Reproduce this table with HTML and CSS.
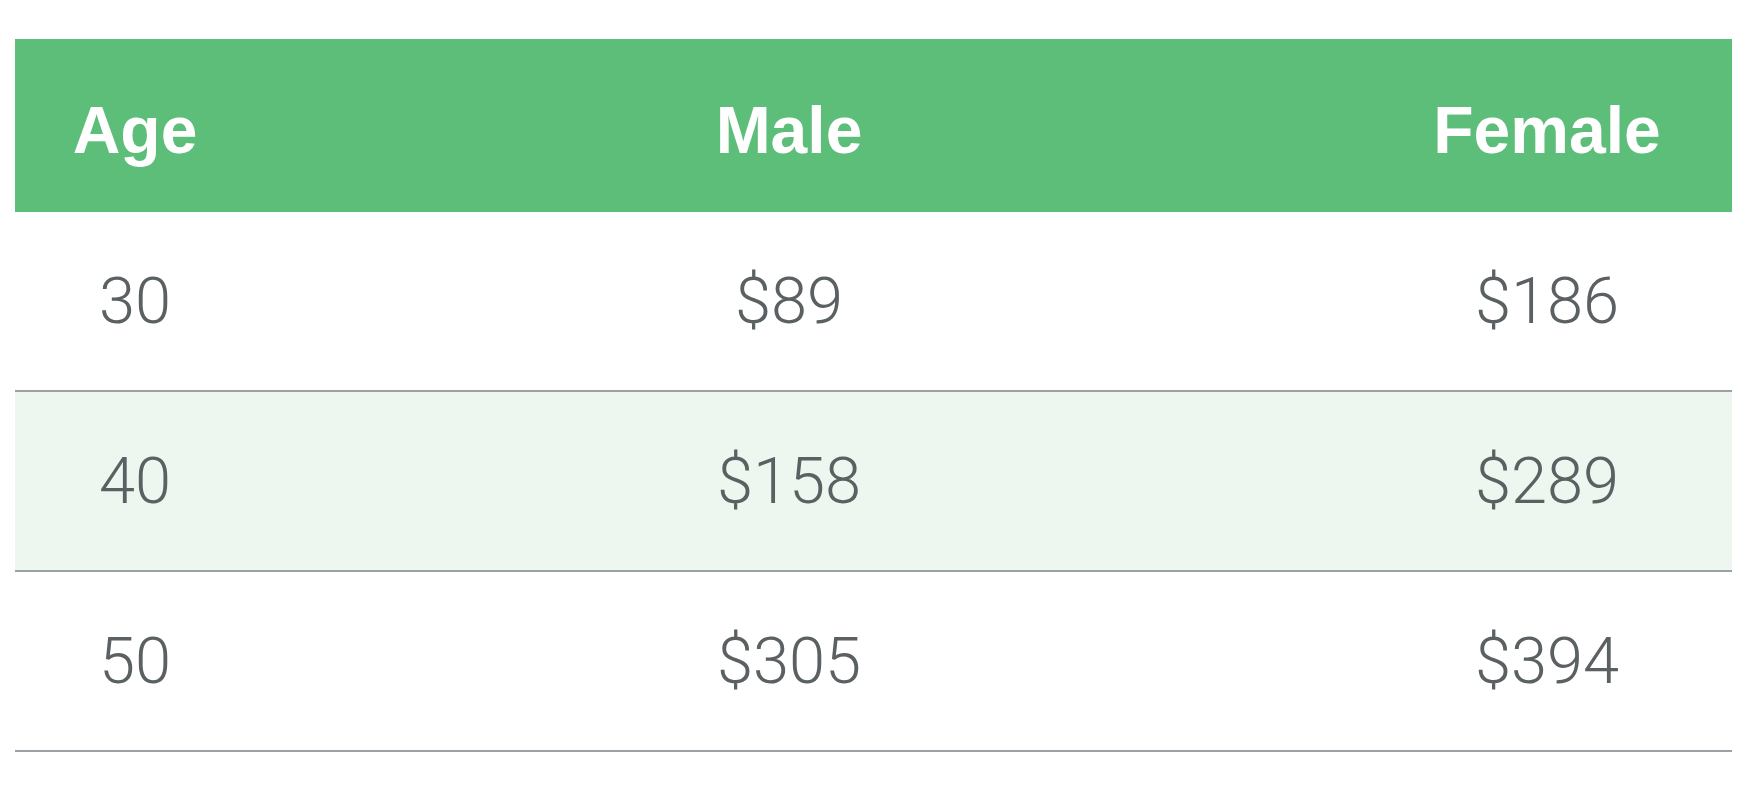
FILE: index.html
```html
<!DOCTYPE html>
<html lang="en">
<head>
<meta charset="utf-8">
<title>Premiums by age</title>
<link rel="stylesheet" href="styles.css">
</head>
<body>
  <div class="page">
    <div class="table">
      <div class="row head">
        <div class="cell c1">Age</div>
        <div class="cell c2">Male</div>
        <div class="cell c3">Female</div>
      </div>
      <div class="row">
        <div class="cell c1">30</div>
        <div class="cell c2">$89</div>
        <div class="cell c3">$186</div>
      </div>
      <div class="row alt">
        <div class="cell c1">40</div>
        <div class="cell c2">$158</div>
        <div class="cell c3">$289</div>
      </div>
      <div class="row">
        <div class="cell c1">50</div>
        <div class="cell c2">$305</div>
        <div class="cell c3">$394</div>
      </div>
    </div>
  </div>
</body>
</html>
```

FILE: styles.css
```css
html, body {
  margin: 0;
  padding: 0;
  background: #ffffff;
}

.page {
  padding: 39px 14px 0 15px;
}

.table {
  display: flex;
  flex-direction: column;
}

.row {
  display: grid;
  grid-template-columns: 240px 1068px 1fr;
  height: 178px;
  border-bottom: 2px solid #9ca1a5;
  align-items: center;
  font-family: Roboto, "Liberation Sans", Arial, sans-serif;
  font-weight: 300;
  font-size: 65px;
  color: #5b6163;
}

.row.head {
  height: 173px;
  border-bottom: none;
  background: #5dbe7a;
  color: #ffffff;
  font-family: "Liberation Sans", Arial, sans-serif;
  font-weight: 700;
  font-size: 66px;
  padding-top: 8px;
  box-sizing: border-box;
}

.row.alt {
  background: #edf7f0;
}

.cell {
  text-align: center;
  white-space: nowrap;
}

.c3 {
  padding-left: 39px;
}
```
